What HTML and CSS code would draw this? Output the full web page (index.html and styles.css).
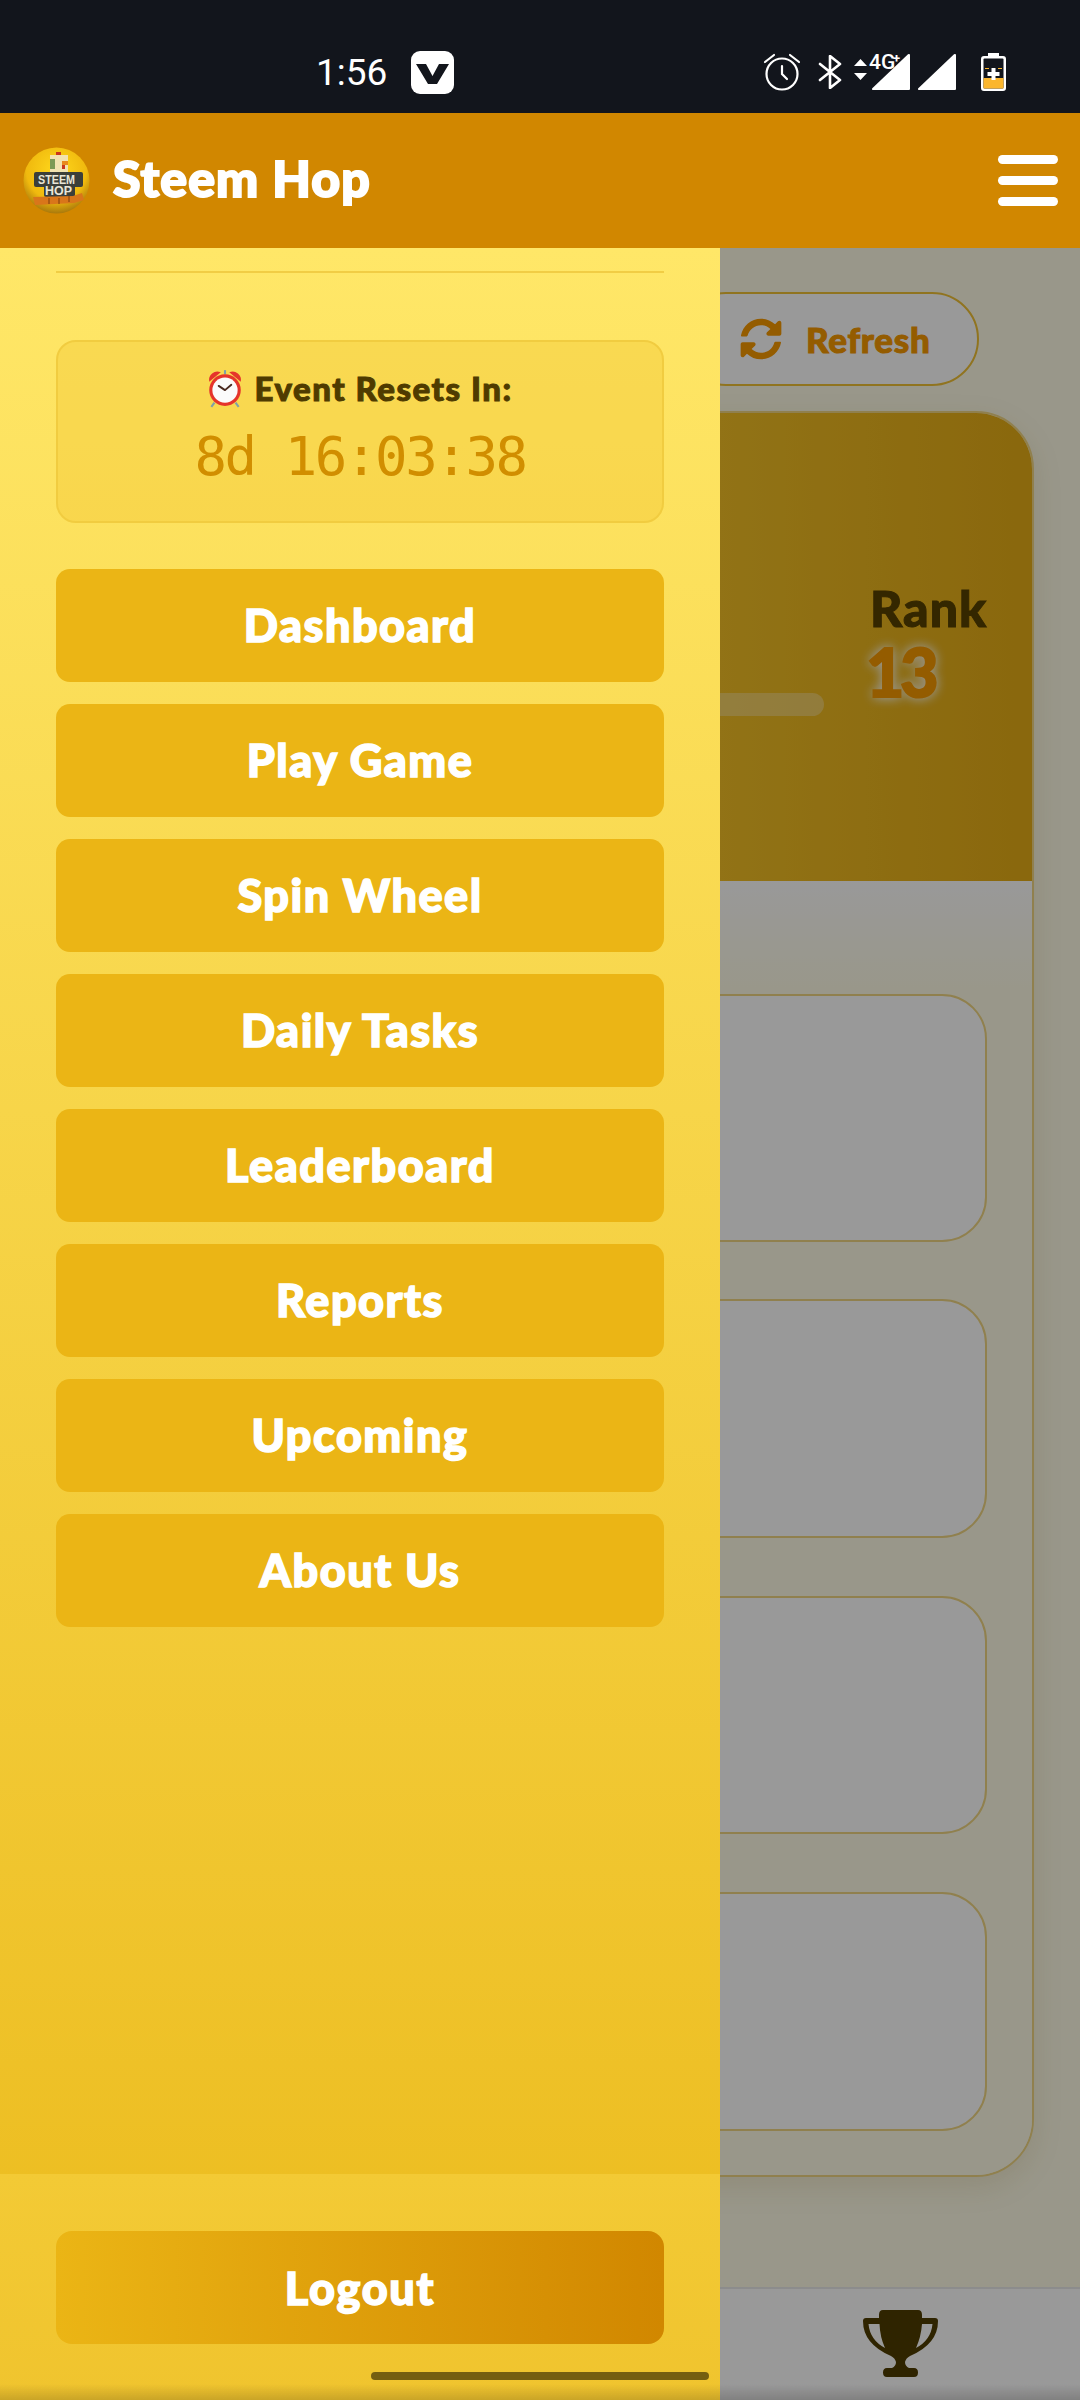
FILE: index.html
```html
<!DOCTYPE html>
<html lang="en">
  <head>
    <meta charset="utf-8" />
    <meta name="viewport" content="width=device-width, initial-scale=1.0" />
    <title>Steem Hop</title>
    <link rel="stylesheet" href="styles.css">
  </head>
  <body>
    <div class="app">
      <!-- Phone status bar -->
      <div class="statusbar">
        <span class="clock">1:56</span>
        <svg class="app-badge" viewBox="0 0 43 43">
          <rect width="43" height="43" rx="9" fill="#fff" />
          <path d="M5 13h10l6.500 12L28 13h10L26 33h-9z" fill="#12151c" />
        </svg>
        <div class="status-icons">
          <svg class="icon-alarm" viewBox="0 0 38 38" fill="none" stroke="#fff" stroke-width="2.200">
            <circle cx="19" cy="21" r="15.500" />
            <path d="M2 9l9-7M36 9l-9-7M19 13v8l5 5" stroke-linecap="round" />
          </svg>
          <svg class="icon-bt" viewBox="0 0 24 34" fill="none" stroke="#fff" stroke-width="2.600" stroke-linejoin="round" stroke-linecap="round">
            <path d="M2 9l20 16-10 8V1l10 8L2 25" />
          </svg>
          <svg class="icon-net" viewBox="0 -8 56 46">
            <path d="M0 13l6.500-7 6.500 7zM0 20h13l-6.500 7z" fill="#fff" />
            <path d="M56 2v34a1 1 0 0 1-1 1H19a1 1 0 0 1-.7-1.700L54 1.300a1.200 1.200 0 0 1 2 .7z" fill="#fff" />
            <text class="net-label" x="15" y="16">4G</text>
            <text class="net-label net-plus" x="39" y="10">+</text>
          </svg>
          <svg class="icon-signal" viewBox="0 0 38 38">
            <path d="M38 2v34a1 1 0 0 1-1 1H1a1 1 0 0 1-.7-1.700L36 1.300a1.200 1.200 0 0 1 2 .7z" fill="#fff" />
          </svg>
          <svg class="icon-battery" viewBox="0 0 25 38">
            <path d="M7 0h11v3h4a3 3 0 0 1 3 3v29a3 3 0 0 1-3 3H3a3 3 0 0 1-3-3V6a3 3 0 0 1 3-3h4z" fill="#fff" />
            <rect x="2.500" y="5.500" width="20" height="30" rx="1" fill="#12151c" />
            <rect x="2.500" y="25" width="20" height="10.500" fill="#fbb62d" />
            <path d="M4 15.500h4M17 15.500h4" stroke="#fbb62d" stroke-width="1" />
            <path d="M10.500 15h4v4h4v4h-4v4h-4v-4h-4v-4h4z" fill="#fff" />
          </svg>
        </div>
      </div>

      <header class="topbar">
        <svg class="logo" viewBox="0 0 67 67">
          <defs>
            <radialGradient id="logo-ball" cx="50%" cy="35%" r="65%">
              <stop offset="0" stop-color="#ffd91c" />
              <stop offset="0.7" stop-color="#f0b90e" />
              <stop offset="1" stop-color="#a9790c" />
            </radialGradient>
          </defs>
          <circle cx="33.500" cy="33.500" r="33" fill="url(#logo-ball)" />
          <rect x="33" y="5" width="5" height="4" fill="#c9361c" />
          <rect x="27" y="8" width="18" height="18" fill="#f2e3b0" />
          <rect x="27" y="12" width="5" height="10" fill="#7d9a55" />
          <rect x="39" y="14" width="6" height="4" fill="#e8891c" />
          <rect x="39" y="18" width="3" height="4" fill="#c9361c" />
          <rect x="11" y="25" width="49" height="15" rx="2" fill="#3c3f3a" />
          <rect x="21" y="37" width="31" height="13" rx="2" fill="#3c3f3a" />
          <path d="M10 50l40-1 9-3 2 7-10 3-39 2z" fill="#d9761a" />
          <path d="M26 51v6M36 51v6M46 49v6" stroke="#7a3d0c" stroke-width="1" />
          <text class="logo-text" x="15" y="37" textLength="37" lengthAdjust="spacingAndGlyphs">STEEM</text>
          <text class="logo-text" x="22" y="48" textLength="27" lengthAdjust="spacingAndGlyphs">HOP</text>
        </svg>
        <span class="brand">Steem Hop</span>
        <button class="menu-toggle" type="button" aria-label="Menu">
          <span></span>
          <span></span>
          <span></span>
        </button>
      </header>

      <!-- Page behind the drawer -->
      <main class="page">
        <button class="refresh" type="button">
          <svg class="refresh-icon" viewBox="0 0 512 512">
            <path d="M370.720 133.280C339.458 104.008 298.888 87.962 255.848 88c-77.458.068-144.328 53.178-162.791 126.850-1.344 5.363-6.122 9.150-11.651 9.150H24.103c-7.498 0-13.194-6.807-11.807-14.176C33.933 94.924 134.813 8 256 8c66.448 0 126.791 26.136 171.315 68.685L463.030 40.970C478.149 25.851 504 36.559 504 57.941V192c0 13.255-10.745 24-24 24H345.941c-21.382 0-32.090-25.851-16.971-40.971l41.750-41.749zM32 296h134.059c21.382 0 32.090 25.851 16.971 40.971l-41.750 41.750c31.262 29.273 71.835 45.319 114.876 45.280 77.418-.070 144.315-53.144 162.787-126.849 1.344-5.363 6.122-9.150 11.651-9.150h57.304c7.498 0 13.194 6.807 11.807 14.176C478.067 417.076 377.187 504 256 504c-66.448 0-126.791-26.136-171.315-68.685L48.970 471.030C33.851 486.149 8 475.441 8 454.059V320c0-13.255 10.745-24 24-24z" />
          </svg>
          Refresh
        </button>

        <section class="stats-card">
          <div class="hero">
            <div class="hero-left">
              <div class="progress"></div>
            </div>
            <div class="rank">
              <div class="rank-label">Rank</div>
              <div class="rank-value">13</div>
            </div>
          </div>
          <div class="rows">
            <div class="row row-tall"></div>
            <div class="row"></div>
            <div class="row"></div>
            <div class="row"></div>
          </div>
        </section>
      </main>

      <nav class="bottom-nav">
        <svg class="trophy" viewBox="0 0 77 68">
          <path fill-rule="evenodd" d="M21 0H56Q60 0 60 5V8H73Q76 8 76 11Q76 34 48 46Q44 48 43 52Q43 56 47 58H52Q56 58 56 62.500Q56 67 52 67H25Q21 67 21 62.500Q21 58 25 58H30Q34 56 34 52Q33 48 29 46Q1 34 1 11Q1 8 4 8H17V5Q17 0 21 0ZM6.500 14H17.500Q18 27 23 38Q8 30 6.500 14ZM70.500 14H60Q59 27 54 38Q69 30 70.500 14Z" />
        </svg>
      </nav>
    </div>

    <div class="backdrop"></div>

    <!-- Side drawer -->
    <aside class="drawer">
      <div class="drawer-body">
        <hr class="drawer-rule" />
        <div class="countdown">
          <div class="countdown-title">
            <svg class="alarm-emoji" viewBox="0 0 34 38">
              <path d="M7 33l-3 4M27 33l3 4" stroke="#7fa0a8" stroke-width="2" />
              <path d="M2 13a8 8 0 0 1 11-9zM32 13a8 8 0 0 0-11-9z" fill="#e5342b" />
              <path d="M17 2v4" stroke="#7fa0a8" stroke-width="2" />
              <circle cx="17" cy="21" r="15" fill="#e5342b" />
              <circle cx="17" cy="21" r="12" fill="#fbfbfb" />
              <path d="M17 21l-6-4M17 21l6-5" stroke="#4a2a20" stroke-width="1.800" stroke-linecap="round" />
            </svg>
            Event Resets In:
          </div>
          <div class="countdown-time">8d 16:03:38</div>
        </div>

        <ul class="drawer-menu">
          <li><a href="#">Dashboard</a></li>
          <li><a href="#">Play Game</a></li>
          <li><a href="#">Spin Wheel</a></li>
          <li><a href="#">Daily Tasks</a></li>
          <li><a href="#">Leaderboard</a></li>
          <li><a href="#">Reports</a></li>
          <li><a href="#">Upcoming</a></li>
          <li><a href="#">About Us</a></li>
        </ul>
      </div>
      <div class="drawer-footer">
        <button class="logout" type="button">Logout</button>
      </div>
    </aside>

    <div class="gesture-handle"></div>
    <div class="gesture-shade"></div>
  </body>
</html>
```

FILE: styles.css
```css
/* Global Styles */
* {
  box-sizing: border-box;
}

body {
  margin: 0;
  width: 1080px;
  height: 2400px;
  position: relative;
  overflow: hidden;
  font-family: "Lato", "Open Sans", sans-serif;
  background: #fffce6;
}

.app {
  display: flex;
  flex-direction: column;
  height: 2400px;
}

/* Status bar */
.statusbar {
  height: 113px;
  flex: none;
  display: flex;
  align-items: flex-start;
  padding: 51px 74px 0 316px;
  background: #12151c;
}

.clock {
  width: 95px;
  font-family: "Roboto", sans-serif;
  font-size: 37px;
  line-height: 43px;
  color: #fff;
}

.app-badge {
  width: 43px;
  height: 43px;
}

.status-icons {
  margin-left: auto;
  display: flex;
  align-items: flex-start;
  margin-top: 2px;
}

.icon-alarm {
  width: 38px;
  height: 38px;
}

.icon-bt {
  width: 24px;
  height: 34px;
  margin: 2px 0 0 17px;
}

.icon-net {
  width: 56px;
  height: 46px;
  margin: -8px 0 0 12px;
}

.net-label {
  font-family: "Roboto", sans-serif;
  font-size: 21px;
  font-weight: 500;
  fill: #fff;
}

.net-plus {
  font-size: 13px;
  font-weight: 700;
}

.icon-signal {
  width: 38px;
  height: 38px;
  margin-left: 8px;
}

.icon-battery {
  width: 25px;
  height: 38px;
  margin-left: 25px;
}

/* Top bar */
.topbar {
  height: 135px;
  flex: none;
  display: flex;
  align-items: center;
  padding: 0 22px 0 23px;
  background: #d18700;
}

.logo {
  width: 67px;
  height: 67px;
}

.logo-text {
  font-family: "Liberation Sans", sans-serif;
  font-size: 13px;
  font-weight: 700;
  fill: #e9e6d8;
}

.brand {
  margin: 0 0 6px 23px;
  font-size: 50px;
  font-weight: 900;
  letter-spacing: 1.100px;
  color: #fff;
  -webkit-text-stroke: 2px #fff;
}

.menu-toggle {
  margin-left: auto;
  width: 60px;
  padding: 0;
  border: none;
  background: none;
  display: flex;
  flex-direction: column;
  gap: 12px;
}

.menu-toggle span {
  height: 9px;
  border-radius: 5px;
  background: #fff;
}

/* Page behind drawer */
.page {
  flex: 1;
  display: flex;
  flex-direction: column;
  padding: 44px 46px 0;
}

.refresh {
  align-self: flex-end;
  width: 300px;
  height: 94px;
  margin-right: 55px;
  padding: 0 0 0 59px;
  display: flex;
  align-items: center;
  gap: 24px;
  background: #fff;
  border: 2px solid #f1c136;
  border-radius: 47px;
  font-family: inherit;
  font-size: 35px;
  font-weight: 900;
  letter-spacing: 0.700px;
  color: #f79900;
  -webkit-text-stroke: 1px #f79900;
}

.refresh-icon {
  width: 42px;
  height: 42px;
  fill: #f79900;
  stroke: none;
}

.stats-card {
  margin-top: 25px;
  height: 1766px;
  border: 2px solid #f0d682;
  border-radius: 58px;
  overflow: hidden;
  background: #fbf9e8;
  box-shadow: 0 10px 30px rgba(120, 90, 0, 0.12);
}

.hero {
  height: 468px;
  display: flex;
  align-items: center;
  padding: 0 46px 3px;
  background: linear-gradient(90deg, #f3c025 68%, #e6ad16 100%);
}

.hero-left {
  flex: 1;
  padding-top: 117px;
}

.progress {
  height: 23px;
  border-radius: 12px;
  background: rgba(255, 255, 255, 0.3);
}

.rank {
  width: 116px;
  margin-left: 46px;
}

.rank-label {
  font-size: 50px;
  line-height: 56px;
  font-weight: 900;
  letter-spacing: 1px;
  color: #574100;
  -webkit-text-stroke: 1px #574100;
}

.rank-value {
  margin: 0 0 3px -4px;
  font-size: 66px;
  line-height: 72px;
  font-weight: 900;
  letter-spacing: -4px;
  color: #f79900;
  -webkit-text-stroke: 2px #f79900;
  text-shadow: 0 0 12px rgba(255, 255, 255, 0.9), 0 0 12px rgba(255, 255, 255, 0.7);
}

.rows {
  display: flex;
  flex-direction: column;
  gap: 58px;
  padding: 113px 45px 0;
  height: 1296px;
  background: linear-gradient(#ffffff, #fffce6 110px);
}

.row {
  height: 238.500px;
  flex: none;
  background: #fff;
  border: 2px solid #f0d682;
  border-radius: 45px;
}

.row-tall {
  height: 248px;
  margin-bottom: -1px;
}

/* Bottom nav */
.bottom-nav {
  height: 113px;
  flex: none;
  display: flex;
  justify-content: flex-end;
  padding: 21px 141px 0 0;
  background: #fff;
  border-top: 2px solid #eaeaea;
}

.trophy {
  width: 77px;
  height: 68px;
  fill: #4f3c00;
}

/* Dim layer */
.backdrop {
  position: absolute;
  top: 248px;
  left: 0;
  width: 1080px;
  height: 2152px;
  background: rgba(0, 0, 0, 0.4);
}

/* Drawer */
.drawer {
  position: absolute;
  top: 248px;
  left: 0;
  width: 720px;
  height: 2152px;
  display: flex;
  flex-direction: column;
  background: linear-gradient(180deg, #ffe768, #ebba1b);
}

.drawer-body {
  flex: 1;
  padding: 23px 56px 0;
}

.drawer-rule {
  height: 2px;
  margin: 0;
  border: none;
  background: #f1cd45;
}

.countdown {
  height: 183px;
  margin-top: 67px;
  padding-top: 26px;
  text-align: center;
  background: rgba(240, 195, 45, 0.35);
  border: 2px solid #f1cc40;
  border-radius: 20px;
}

.countdown-title {
  display: flex;
  justify-content: center;
  align-items: center;
  gap: 11px;
  font-size: 33px;
  line-height: 40px;
  font-weight: 900;
  letter-spacing: 1.500px;
  color: #4f3b00;
  -webkit-text-stroke: 1px #4f3b00;
}

.alarm-emoji {
  width: 36px;
  height: 40px;
  stroke-width: 0;
}

.countdown-time {
  margin-top: 18px;
  font-family: "DejaVu Sans Mono", monospace;
  font-size: 54px;
  line-height: 62px;
  letter-spacing: -2.400px;
  color: #d18e00;
}

.drawer-menu {
  list-style: none;
  margin: 46px 0 0;
  padding: 0;
  display: flex;
  flex-direction: column;
  gap: 22.500px;
}

.drawer-menu a {
  display: block;
  height: 112.500px;
  line-height: 112px;
  text-align: center;
  text-decoration: none;
  font-size: 45px;
  font-weight: 900;
  letter-spacing: 1.500px;
  color: #fff;
  -webkit-text-stroke: 1.500px #fff;
  background: #ebb515;
  border-radius: 14px;
}

.drawer-footer {
  height: 226px;
  flex: none;
  padding: 57px 56px 0;
  background: linear-gradient(#f3ca35, #f0c42e);
}

.logout {
  display: block;
  width: 100%;
  height: 113px;
  border: none;
  border-radius: 16px;
  font-family: inherit;
  font-size: 45px;
  font-weight: 900;
  letter-spacing: 1.700px;
  color: #fff;
  -webkit-text-stroke: 1.500px #fff;
  background: linear-gradient(90deg, #ebb515, #d18700);
}

/* Gesture bar */
.gesture-handle {
  position: absolute;
  left: 371px;
  top: 2372px;
  width: 338px;
  height: 8px;
  border-radius: 4px;
  background: #755e10;
}

.gesture-shade {
  position: absolute;
  left: 0;
  bottom: 0;
  width: 1080px;
  height: 16px;
  background: linear-gradient(rgba(0, 0, 0, 0), rgba(0, 0, 0, 0.16));
}
```
